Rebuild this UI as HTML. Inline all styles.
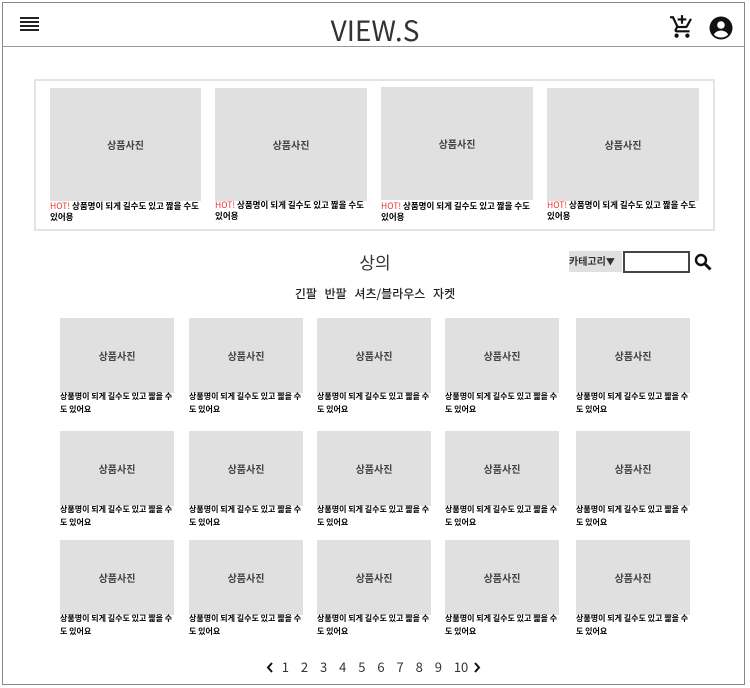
<!DOCTYPE html>
<html><head><meta charset="utf-8"><style>
*{margin:0;padding:0;box-sizing:border-box}
body{width:750px;height:688px;background:#fff;font-family:"Liberation Sans","Noto Sans CJK KR",sans-serif;position:relative;overflow:hidden;color:#111}
.frame{position:absolute;left:2px;top:2px;width:743px;height:683px;border:1px solid #888}
.hline{position:absolute;left:2px;top:46px;width:743px;height:1px;background:#999}
.abs{position:absolute}
.logo{left:0;width:750px;top:10px;text-align:center;font-size:28px;color:#333;font-family:"Noto Sans CJK KR",sans-serif}
.box{left:34px;top:79px;width:681px;height:152px;border:2px solid #e4e4e4}
.img{background:#e0e0e0;display:flex;align-items:center;justify-content:center;font-size:10px;font-weight:bold;color:#444;font-family:"Noto Sans CJK KR",sans-serif}
.t{font-size:8.5px;font-weight:bold;line-height:11px;font-family:"Noto Sans CJK KR",sans-serif;color:#000}
.hot{color:#e33;font-weight:normal}
</style></head><body>
<div class="frame"></div><div class="hline"></div>
<svg class="abs" style="left:20px;top:16px" width="19" height="16" viewBox="0 0 19 16"><g fill="#222"><rect y="1" width="19" height="2"/><rect y="5" width="19" height="2"/><rect y="9" width="19" height="2"/><rect y="13" width="19" height="2"/></g></svg>
<div class="abs logo">VIEW.S</div>
<svg class="abs" style="left:669px;top:14px" width="26" height="26" viewBox="0 0 24 24"><path fill="#111" d="M11 9h2V6h3V4h-3V1h-2v3H8v2h3v3zm-4 9c-1.1 0-2 .9-2 2s.9 2 2 2 2-.9 2-2-.9-2-2-2zm10 0c-1.1 0-2 .9-2 2s.9 2 2 2 2-.9 2-2-.9-2-2-2zm-9.83-3.25l.03-.12.9-1.63h7.45c.75 0 1.41-.41 1.75-1.03l3.86-7.01L19.42 4l-3.87 7H8.53L4.27 2H1v2h2l3.6 7.59-1.35 2.45c-.16.28-.25.61-.25.96 0 1.1.9 2 2 2h12v-2H7.42c-.13 0-.25-.11-.25-.25z"/></svg>
<svg class="abs" style="left:709px;top:16px" width="24" height="24" viewBox="0 0 24 24"><circle cx="12" cy="12" r="11.5" fill="#111"/><circle cx="12" cy="9" r="3.8" fill="#fff"/><path fill="#fff" d="M4.8 18.5c1.5-2.6 4.2-3.9 7.2-3.9s5.7 1.3 7.2 3.9C17.5 20.4 15 21.5 12 21.5s-5.5-1.1-7.2-3z"/></svg>
<div class="abs box"></div>
<div class="abs img" style="left:50px;top:88px;width:151px;height:113px">상품사진</div>
<div class="abs img" style="left:215px;top:88px;width:152px;height:113px">상품사진</div>
<div class="abs img" style="left:381px;top:87px;width:152px;height:113px">상품사진</div>
<div class="abs img" style="left:547px;top:88px;width:152px;height:113px">상품사진</div>
<div class="abs t" style="left:50px;top:201px;width:150px"><span class="hot">HOT!</span> 상품명이 되게 길수도 있고 짧을 수도<br>있어용</div>
<div class="abs t" style="left:215px;top:200px;width:150px"><span class="hot">HOT!</span> 상품명이 되게 길수도 있고 짧을 수도<br>있어용</div>
<div class="abs t" style="left:381px;top:201px;width:150px"><span class="hot">HOT!</span> 상품명이 되게 길수도 있고 짧을 수도<br>있어용</div>
<div class="abs t" style="left:547px;top:200px;width:150px"><span class="hot">HOT!</span> 상품명이 되게 길수도 있고 짧을 수도<br>있어용</div>
<div class="abs" style="left:0;width:750px;top:249px;text-align:center;font-size:17px;color:#333;font-family:'Noto Sans CJK KR',sans-serif">상의</div>
<div class="abs" style="left:0;width:750px;top:285px;text-align:center;font-size:12px;color:#222;font-weight:500;font-family:'Noto Sans CJK KR',sans-serif;word-spacing:5px">긴팔 반팔 셔츠/블라우스 자켓</div>
<div class="abs" style="left:569px;top:251px;width:53px;height:21px;background:#e0e0e0;font-size:10px;line-height:20px;font-family:'Noto Sans CJK KR',sans-serif;font-weight:bold;color:#333">카테고리<span style="font-size:9px">▼</span></div>
<div class="abs" style="left:623px;top:251px;width:67px;height:22px;border:2px solid #444"></div>
<svg class="abs" style="left:694px;top:253px" width="18" height="18" viewBox="0 0 18 18"><circle cx="7" cy="7" r="5" fill="none" stroke="#111" stroke-width="2.4"/><path d="M10.5 10.5L16.5 16.5" stroke="#111" stroke-width="3"/></svg>
<div id="grid"></div>
<svg class="abs" style="left:266px;top:662px" width="8" height="11" viewBox="0 0 8 11"><path d="M6 1L2 5.5 6 10" fill="none" stroke="#111" stroke-width="2"/></svg>
<svg class="abs" style="left:473px;top:662px" width="8" height="11" viewBox="0 0 8 11"><path d="M2 1L6 5.5 2 10" fill="none" stroke="#111" stroke-width="2"/></svg>
<div class="abs" style="left:0;width:750px;top:657px;text-align:center;font-size:13px;color:#333;font-family:'Noto Sans CJK KR',sans-serif;word-spacing:9px">1 2 3 4 5 6 7 8 9 10</div>
<script>
var xs=[60,189,317,445,576],ys=[318,431,540],h='';
ys.forEach(function(y){xs.forEach(function(x){
h+='<div class="abs img" style="left:'+x+'px;top:'+y+'px;width:114px;height:75px">상품사진</div>';
h+='<div class="abs t" style="left:'+x+'px;top:'+(y+72)+'px;width:116px;line-height:13px;font-size:8px">상품명이 되게 길수도 있고 짧을 수도 있어요</div>';
});});
document.getElementById('grid').innerHTML=h;
</script>
</body></html>
